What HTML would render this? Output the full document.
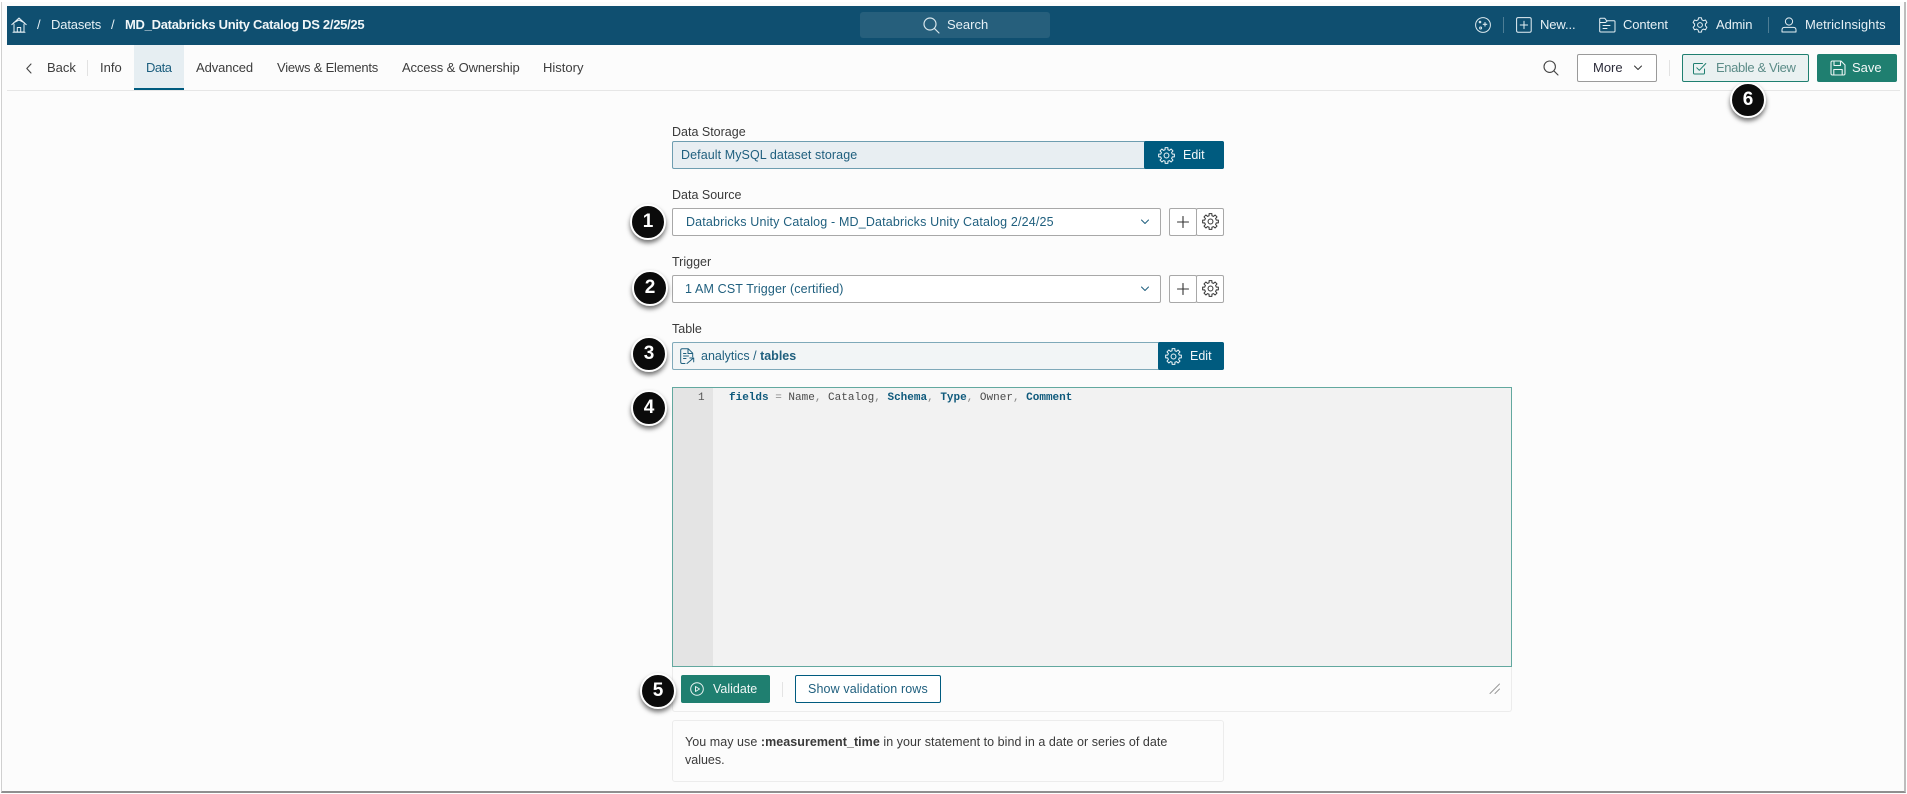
<!DOCTYPE html>
<html><head><meta charset="utf-8"><title>Dataset</title>
<style>
html,body{margin:0;padding:0;background:#fff}
body{width:1907px;height:794px;position:relative;overflow:hidden;font-family:"Liberation Sans",sans-serif;font-size:13px;color:#333}
div,span.t,svg{position:absolute}
.t{position:absolute;white-space:nowrap;line-height:16px;height:16px}
.w{color:#e6f0f5}
.lab{color:#3a3a3a;font-size:12.5px}
.tab{color:#3d3d3d;font-size:13px}
.box{box-sizing:border-box;border-radius:2px}
.b{width:36px;height:36px;border-radius:50%;background:#0b0b0b;border:2px solid #fff;box-sizing:border-box;box-shadow:0 3px 5px rgba(0,0,0,.55);color:#fff;font-size:19px;font-weight:bold;text-align:center;line-height:31px}
.teal{color:#1f5f7e}
svg{fill:none;stroke-linecap:round;stroke-linejoin:round}
</style></head><body>

<!-- frame -->
<div style="left:1px;top:2px;width:1902px;height:789px;background:#fcfcfc;border-left:1px solid #d0d0d0;border-right:2px solid #bdbdbd;border-bottom:2px solid #8f8f8f;box-sizing:content-box"></div>

<!-- header -->
<div style="left:7px;top:6px;width:1893px;height:39px;background:#0f4f70"></div>
<svg style="left:11px;top:17px" width="16" height="16" viewBox="0 0 16 16" stroke="#e6f0f5" stroke-width="1"><path d="M.8 7.6 8 1l7.2 6.6M2.500 5.800 8 3l5.500 2.800M3 7v8h10V7M6.300 15v-4.500h3.400V15M2 15.200h12"/></svg>
<span class="t w" style="left:37px;top:17px">/</span>
<span class="t w" style="left:51px;top:17px;font-size:13px;letter-spacing:-.15px">Datasets</span>
<span class="t w" style="left:111px;top:17px">/</span>
<span class="t" style="left:125px;top:17px;color:#f0f6f8;font-weight:bold;font-size:13px;letter-spacing:-.28px">MD_Databricks Unity Catalog DS 2/25/25</span>

<div style="left:860px;top:12px;width:190px;height:26px;background:#265f7c;border-radius:3px"></div>
<svg style="left:923px;top:17px" width="17" height="17" viewBox="0 0 17 17" stroke="#d8e6ec" stroke-width="1.2"><circle cx="7" cy="7" r="6"/><path d="M11.400 11.400 16 16"/></svg>
<span class="t w" style="left:947px;top:17px;font-size:13px">Search</span>

<svg style="left:1475px;top:17px" width="16" height="16" viewBox="0 0 16 16" stroke="#dce9ee" stroke-width="1"><circle cx="8" cy="8" r="7.400"/><path d="M10 5.500v3.600M8.200 7.300h3.600" stroke-width="1.100"/><circle cx="5" cy="5" r=".8"/><circle cx="5.600" cy="11" r="1"/></svg>
<div style="left:1503px;top:17px;width:1px;height:16px;background:#4d7d95"></div>
<svg style="left:1516px;top:17px" width="16" height="16" viewBox="0 0 16 16" stroke="#e6f0f5" stroke-width="1"><rect x=".6" y=".6" width="14.600" height="14.600" rx="1.500"/><path d="M8 4.200v7.400M4.200 8h7.400"/></svg>
<span class="t w" style="left:1540px;top:17px;font-size:13px;letter-spacing:-.1px">New...</span>
<svg style="left:1599px;top:17px" width="17" height="16" viewBox="0 0 17 16" stroke="#e6f0f5" stroke-width="1"><path d="M.7 14V2.200q0-1 1-1h4l2 2.600h7.300q1 0 1 1V14q0 1-1 1H1.700q-1 0-1-1zM.7 5.500h5.800l2-1.700M4 8.500h7M4 11.500h4"/></svg>
<span class="t w" style="left:1623px;top:17px;font-size:13px;letter-spacing:-.1px">Content</span>
<svg style="left:1692px;top:17px" width="16" height="16" viewBox="0 0 16 16" stroke="#e6f0f5" stroke-width="1"><circle cx="8" cy="8" r="2.400"/><path d="M6.600.7h2.800l.5 2.100 1.600.9 2-.7 1.400 2.500-1.500 1.500v1.800l1.500 1.500-1.400 2.500-2-.7-1.600.9-.5 2.100H6.600l-.5-2.100-1.600-.9-2 .7-1.400-2.500 1.500-1.500V7L1.100 5.500l1.400-2.500 2 .7 1.600-.9z"/></svg>
<span class="t w" style="left:1716px;top:17px;font-size:13px;letter-spacing:-.1px">Admin</span>
<div style="left:1768px;top:17px;width:1px;height:16px;background:#4d7d95"></div>
<svg style="left:1781px;top:17px" width="16" height="16" viewBox="0 0 16 16" stroke="#e6f0f5" stroke-width="1"><circle cx="8" cy="4.500" r="3.600"/><path d="M1 15v-2q0-2.600 2.600-2.600h8.800Q15 10.400 15 13v2z"/></svg>
<span class="t w" style="left:1805px;top:17px;font-size:13px;letter-spacing:.03px">MetricInsights</span>

<!-- tabs -->
<div style="left:7px;top:90px;width:1893px;height:1px;background:#e6e6e6"></div>
<div style="left:134px;top:45px;width:50px;height:43px;background:#e6eef2;border-bottom:2px solid #005b7f;box-sizing:content-box"></div>
<svg style="left:25px;top:63px" width="8" height="11" viewBox="0 0 8 11" stroke="#444" stroke-width="1.100"><path d="M6 1 1.800 5.500 6 10"/></svg>
<span class="t tab" style="left:47px;top:60px">Back</span>
<div style="left:87px;top:60px;width:1px;height:16px;background:#e2e2e2"></div>
<span class="t tab" style="left:100px;top:60px">Info</span>
<span class="t tab" style="left:146px;top:60px;color:#1d5f7f;letter-spacing:-.5px">Data</span>
<span class="t tab" style="left:196px;top:60px;letter-spacing:-.1px">Advanced</span>
<span class="t tab" style="left:277px;top:60px;letter-spacing:-.22px">Views &amp; Elements</span>
<span class="t tab" style="left:402px;top:60px;letter-spacing:-.13px">Access &amp; Ownership</span>
<span class="t tab" style="left:543px;top:60px">History</span>

<svg style="left:1543px;top:60px" width="16" height="16" viewBox="0 0 16 16" stroke="#444" stroke-width="1.100"><circle cx="6.700" cy="6.700" r="5.700"/><path d="M10.800 10.800 15 15"/></svg>
<div class="box" style="left:1577px;top:54px;width:80px;height:28px;background:#fff;border:1px solid #9a9a9a"></div>
<span class="t" style="left:1593px;top:60px;color:#2c2c3a">More</span>
<svg style="left:1633px;top:65px" width="10" height="6" viewBox="0 0 10 6" stroke="#333" stroke-width="1"><path d="M1.500 1 5 4.500 8.500 1"/></svg>
<div style="left:1669px;top:60px;width:1px;height:16px;background:#e2e2e2"></div>
<div class="box" style="left:1682px;top:54px;width:127px;height:28px;background:#eaf1f1;border:1px solid #1f7f70"></div>
<svg style="left:1693px;top:62px" width="14" height="13" viewBox="0 0 14 13" stroke="#1f7f70" stroke-width="1"><path d="M11.500 7v4q0 1-1 1h-9q-1 0-1-1V2.500q0-1 1-1h8M3.800 5.800 6.300 8.300 12.800 1.500"/></svg>
<span class="t" style="left:1716px;top:60px;color:#5c8c88;font-size:13px;letter-spacing:-.37px">Enable &amp; View</span>
<div class="box" style="left:1817px;top:54px;width:80px;height:28px;background:#1f7f70"></div>
<svg style="left:1830px;top:60px" width="16" height="16" viewBox="0 0 16 16" stroke="#eaf4f2" stroke-width="1.100"><path d="M1 2.500q0-1.500 1.500-1.500h8.500l4 4v8.500q0 1.500-1.500 1.500h-11Q1 15 1 13.500zM4 1v4.500h6.500V1M3.800 15V9.500h8.400V15"/></svg>
<span class="t" style="left:1852px;top:60px;color:#f2f8f7">Save</span>

<div class="b" style="left:1730px;top:82px">6</div>

<!-- Data Storage -->
<span class="t lab" style="left:672px;top:124px">Data Storage</span>
<div class="box" style="left:672px;top:141px;width:552px;height:28px;background:#e8eef2;border:1px solid #6e9db0"></div>
<span class="t teal" style="left:681px;top:147px;font-size:12.5px;letter-spacing:.08px">Default MySQL dataset storage</span>
<div class="box" style="left:1144px;top:141px;width:80px;height:28px;background:#005b7f"></div>
<svg style="left:1158px;top:147px" width="17" height="17" viewBox="0 0 16 16" stroke="#eef5f8" stroke-width=".95"><circle cx="8" cy="8" r="2.300"/><path d="M6.650 2.570 6.700.61H9.300L9.350 2.570 10.880 3.210 12.310 1.860 14.140 3.690 12.790 5.120 13.430 6.650 15.390 6.700V9.300L13.430 9.350 12.790 10.880 14.140 12.310 12.310 14.140 10.880 12.790 9.350 13.430 9.300 15.390H6.700L6.650 13.430 5.120 12.790 3.690 14.140 1.860 12.310 3.210 10.880 2.570 9.350.61 9.300V6.700L2.570 6.650 3.210 5.120 1.860 3.690 3.690 1.860 5.120 3.210z"/></svg>
<span class="t" style="left:1183px;top:147px;color:#f2f7f9;font-size:12.5px">Edit</span>

<!-- Data Source -->
<span class="t lab" style="left:672px;top:187px">Data Source</span>
<div class="box" style="left:672px;top:208px;width:489px;height:28px;background:#fff;border:1px solid #a8a8a8"></div>
<span class="t teal" style="left:686px;top:214px;font-size:12.5px;letter-spacing:.16px">Databricks Unity Catalog - MD_Databricks Unity Catalog 2/24/25</span>
<svg style="left:1140px;top:219px" width="10" height="6" viewBox="0 0 10 6" stroke="#1f5f7e" stroke-width="1"><path d="M1.500 1 5 4.500 8.500 1"/></svg>
<div class="box" style="left:1169px;top:208px;width:28px;height:28px;background:#fff;border:1px solid #a8a8a8"></div>
<div class="box" style="left:1196px;top:208px;width:28px;height:28px;background:#fff;border:1px solid #a8a8a8"></div>
<svg style="left:1177px;top:216px" width="12" height="12" viewBox="0 0 12 12" stroke="#333" stroke-width="1.100"><path d="M6 .5v11M.5 6h11"/></svg>
<svg style="left:1202px;top:213px" width="17" height="17" viewBox="0 0 16 16" stroke="#333" stroke-width=".95"><circle cx="8" cy="8" r="2.300"/><path d="M6.650 2.570 6.700.61H9.300L9.350 2.570 10.880 3.210 12.310 1.860 14.140 3.690 12.790 5.120 13.430 6.650 15.390 6.700V9.300L13.430 9.350 12.790 10.880 14.140 12.310 12.310 14.140 10.880 12.790 9.350 13.430 9.300 15.390H6.700L6.650 13.430 5.120 12.790 3.690 14.140 1.860 12.310 3.210 10.880 2.570 9.350.61 9.300V6.700L2.570 6.650 3.210 5.120 1.860 3.690 3.690 1.860 5.120 3.210z"/></svg>
<div class="b" style="left:630px;top:204px">1</div>

<!-- Trigger -->
<span class="t lab" style="left:672px;top:254px">Trigger</span>
<div class="box" style="left:672px;top:275px;width:489px;height:28px;background:#fff;border:1px solid #a8a8a8"></div>
<span class="t teal" style="left:685px;top:281px;font-size:12.5px;letter-spacing:.14px">1 AM CST Trigger (certified)</span>
<svg style="left:1140px;top:286px" width="10" height="6" viewBox="0 0 10 6" stroke="#1f5f7e" stroke-width="1"><path d="M1.500 1 5 4.500 8.500 1"/></svg>
<div class="box" style="left:1169px;top:275px;width:28px;height:28px;background:#fff;border:1px solid #a8a8a8"></div>
<div class="box" style="left:1196px;top:275px;width:28px;height:28px;background:#fff;border:1px solid #a8a8a8"></div>
<svg style="left:1177px;top:283px" width="12" height="12" viewBox="0 0 12 12" stroke="#333" stroke-width="1.100"><path d="M6 .5v11M.5 6h11"/></svg>
<svg style="left:1202px;top:280px" width="17" height="17" viewBox="0 0 16 16" stroke="#333" stroke-width=".95"><circle cx="8" cy="8" r="2.300"/><path d="M6.650 2.570 6.700.61H9.300L9.350 2.570 10.880 3.210 12.310 1.860 14.140 3.690 12.790 5.120 13.430 6.650 15.390 6.700V9.300L13.430 9.350 12.790 10.880 14.140 12.310 12.310 14.140 10.880 12.790 9.350 13.430 9.300 15.390H6.700L6.650 13.430 5.120 12.790 3.690 14.140 1.860 12.310 3.210 10.880 2.570 9.350.61 9.300V6.700L2.570 6.650 3.210 5.120 1.860 3.690 3.690 1.860 5.120 3.210z"/></svg>
<div class="b" style="left:632px;top:270px">2</div>

<!-- Table -->
<span class="t lab" style="left:672px;top:321px">Table</span>
<div class="box" style="left:672px;top:342px;width:552px;height:28px;background:#f2f5f6;border:1px solid #7fa9b9"></div>
<svg style="left:680px;top:348px" width="15" height="17" viewBox="0 0 15 17" stroke="#1f5f7e" stroke-width="1"><path d="M5 15.500H2.200q-1.500 0-1.500-1.500V2.200q0-1.500 1.500-1.500h6l4.500 4.500v3.500M8 1v4.500h4.500M3.500 5.500h2.500M3.500 8h5M3.500 10.500h2.500M7 15.500l6.500-5.500M9.800 10h3.900v3.900"/></svg>
<span class="t teal" style="left:701px;top:348px;font-size:12.5px">analytics / <b>tables</b></span>
<div class="box" style="left:1158px;top:342px;width:66px;height:28px;background:#005b7f"></div>
<svg style="left:1165px;top:348px" width="17" height="17" viewBox="0 0 16 16" stroke="#eef5f8" stroke-width=".95"><circle cx="8" cy="8" r="2.300"/><path d="M6.650 2.570 6.700.61H9.300L9.350 2.570 10.880 3.210 12.310 1.860 14.140 3.690 12.790 5.120 13.430 6.650 15.390 6.700V9.300L13.430 9.350 12.790 10.880 14.140 12.310 12.310 14.140 10.880 12.790 9.350 13.430 9.300 15.390H6.700L6.650 13.430 5.120 12.790 3.690 14.140 1.860 12.310 3.210 10.880 2.570 9.350.61 9.300V6.700L2.570 6.650 3.210 5.120 1.860 3.690 3.690 1.860 5.120 3.210z"/></svg>
<span class="t" style="left:1190px;top:348px;color:#f2f7f9;font-size:12.5px">Edit</span>
<div class="b" style="left:631px;top:336px">3</div>

<!-- Editor -->
<div style="left:672px;top:387px;width:840px;height:280px;background:#f2f2f2;border:1px solid #62a89f;box-sizing:border-box"></div>
<div style="left:673px;top:388px;width:40px;height:278px;background:#e4e4e4"></div>
<span class="t" style="left:698px;top:390px;font-family:'Liberation Mono',monospace;font-size:11px;color:#555">1</span>
<span class="t" style="left:729px;top:390px;font-family:'Liberation Mono',monospace;font-size:11px;color:#4a4a4a"><b style="color:#0f5a7c">fields</b> <span style="color:#888">=</span> Name<span style="color:#888">,</span> Catalog<span style="color:#888">,</span> <b style="color:#0f5a7c">Schema</b><span style="color:#888">,</span> <b style="color:#0f5a7c">Type</b><span style="color:#888">,</span> Owner<span style="color:#888">,</span> <b style="color:#0f5a7c">Comment</b></span>
<div class="b" style="left:631px;top:390px">4</div>

<!-- Below editor panel -->
<div style="left:672px;top:667px;width:840px;height:45px;box-sizing:border-box;border:1px solid #ececec;border-top:none;border-radius:0 0 3px 3px"></div>
<div class="box" style="left:681px;top:675px;width:89px;height:28px;background:#1f7f70"></div>
<svg style="left:690px;top:682px" width="14" height="14" viewBox="0 0 14 14" stroke="#e8f3f1" stroke-width="1"><circle cx="7" cy="7" r="6.300"/><path d="M5.500 4.500v5l4-2.500z"/></svg>
<span class="t" style="left:713px;top:681px;color:#f0f7f6;font-size:12.5px">Validate</span>
<div style="left:782px;top:682px;width:1px;height:15px;background:#e4e4e4"></div>
<div class="box" style="left:795px;top:675px;width:146px;height:28px;background:#fff;border:1px solid #005b7f"></div>
<span class="t teal" style="left:808px;top:681px;font-size:12.5px;letter-spacing:.12px">Show validation rows</span>
<svg style="left:1489px;top:683px" width="12" height="12" viewBox="0 0 12 12" stroke="#999" stroke-width="1"><path d="M1 10.500 10.500 1M6 10.500l4.500-4.500"/></svg>
<div class="b" style="left:640px;top:673px">5</div>

<!-- Note -->
<div style="left:672px;top:720px;width:552px;height:62px;box-sizing:border-box;border:1px solid #ececec;border-radius:3px"></div>
<span class="t" style="left:685px;top:734px;color:#3a3a3a;font-size:12.5px;letter-spacing:.05px">You may use <b>:measurement_time</b> in your statement to bind in a date or series of date</span>
<span class="t" style="left:685px;top:752px;color:#3a3a3a;font-size:12.5px">values.</span>

</body></html>
